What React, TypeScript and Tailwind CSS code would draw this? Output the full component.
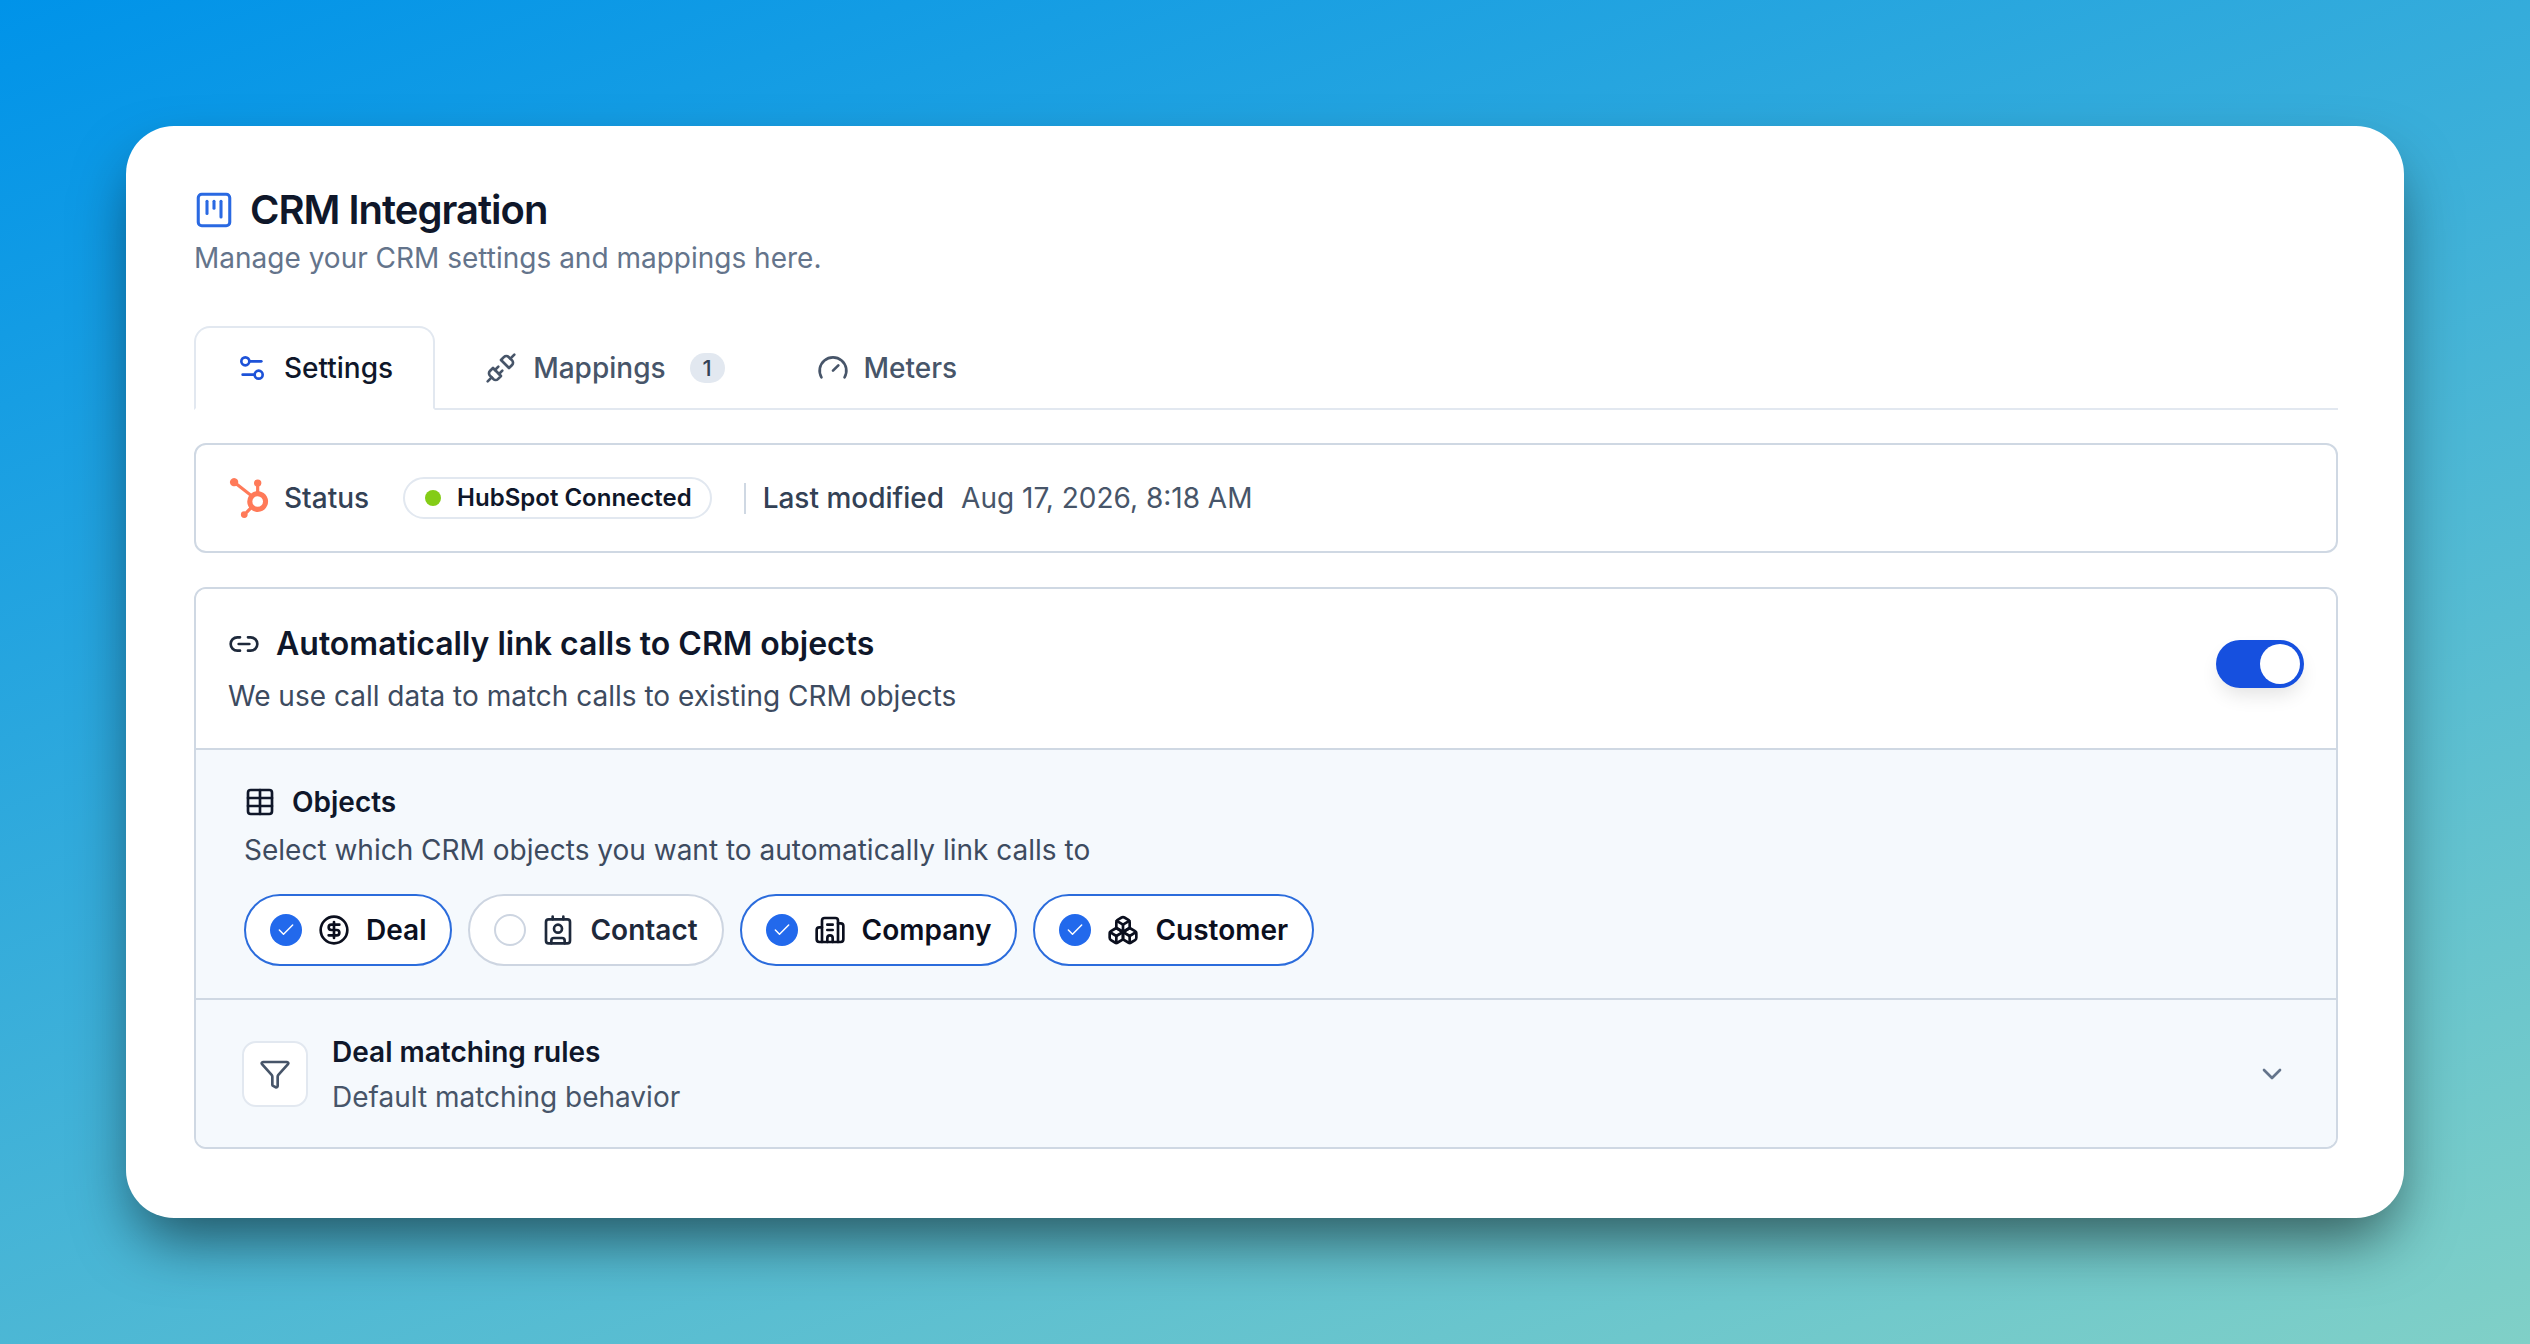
import React from "react";
import {
  Boxes,
  Building2,
  Check,
  ChevronDown,
  CircleDollarSign,
  Contact,
  Funnel,
  Gauge,
  Link2,
  Settings2,
  SquareKanban,
  Table,
  Unplug,
} from "lucide-react";
import { SiHubspot } from "react-icons/si";

type Obj = { label: string; on: boolean; Icon: React.ComponentType<{ size?: number; className?: string }> };

const objects: Obj[] = [
  { label: "Deal", on: true, Icon: CircleDollarSign },
  { label: "Contact", on: false, Icon: Contact },
  { label: "Company", on: true, Icon: Building2 },
  { label: "Customer", on: true, Icon: Boxes },
];

function Chip({ label, on, Icon }: Obj) {
  return (
    <div
      className={
        on
          ? "flex h-[72px] items-center rounded-full border-2 border-[#2b6cdc] bg-white pl-6 pr-6 text-[#0b0f1e]"
          : "flex h-[72px] items-center rounded-full border-2 border-[#cdd5e1] bg-white pl-6 pr-6 text-[#1e293b]"
      }
    >
      {on ? (
        <span className="flex size-8 items-center justify-center rounded-full bg-[#2269ec] text-white">
          <Check size={20} strokeWidth={1.75} />
        </span>
      ) : (
        <span className="size-8 rounded-full border-2 border-[#cdd5e1] bg-white" />
      )}
      <Icon size={32} className="ml-4" />
      <span className="ml-4 text-[28px] font-semibold leading-9">{label}</span>
    </div>
  );
}

export default function App() {
  return (
    <div className="min-h-screen bg-[linear-gradient(160deg,#0093E9_0%,#80D0C7_100%)] p-[126px] font-[Inter,sans-serif]">
      <div className="rounded-[48px] bg-white pb-[69px] pl-[68px] pr-[66px] pt-[60px] shadow-[0_30px_60px_-10px_rgba(0,0,0,0.55)]">
        <div className="flex h-12 items-center gap-[15px]">
          <SquareKanban size={42} strokeWidth={1.75} className="-ml-[1px] text-[#2a69e2]" />
          <h1 className="text-[40px] font-semibold leading-[48px] tracking-[-1px] text-[#0f172a]">CRM Integration</h1>
        </div>
        <p className="mt-1 text-[28px] leading-10 text-[#64748b]">Manage your CRM settings and mappings here.</p>

        <div className="mt-12 flex gap-2 border-b-2 border-[#e2e8f0]">
          <div className="-mb-[2px] flex h-[84px] items-center gap-4 rounded-t-[16px] border-2 border-[#e2e8f0] border-b-white bg-white pl-10 pr-10">
            <Settings2 size={32} className="text-[#1d52d8]" />
            <span className="text-[28px] font-medium text-[#0f172a]">Settings</span>
          </div>
          <div className="-mb-[2px] flex h-[84px] items-center border-2 border-transparent px-10">
            <Unplug size={32} className="text-[#475569]" />
            <span className="ml-4 text-[28px] font-medium text-[#475569]">Mappings</span>
            <span className="ml-6 flex h-[30px] w-[35px] items-center justify-center rounded-full bg-[#e2e8f0] text-[22px] font-medium text-[#334155]">
              1
            </span>
          </div>
          <div className="-mb-[2px] flex h-[84px] items-center gap-[15px] border-2 border-transparent pl-10 pr-10">
            <Gauge size={32} className="text-[#475569]" />
            <span className="text-[28px] font-medium text-[#475569]">Meters</span>
          </div>
        </div>

        <div className="mt-[33px] flex h-[110px] items-center rounded-xl border-2 border-[#cfd8e3] pl-[33px]">
          <SiHubspot size={40} className="text-[#ff7a59]" />
          <span className="ml-[15px] text-[28px] font-medium text-[#334155]">Status</span>
          <span className="ml-[34px] flex h-[42px] items-center rounded-full border-2 border-[#e2e8f0] bg-white pl-5 pr-[18px]">
            <span className="size-4 rounded-full bg-[#84cc16]" />
            <span className="ml-4 text-[24px] font-semibold text-[#0f172a]">HubSpot Connected</span>
          </span>
          <span className="ml-8 h-[31px] w-[2px] bg-[#cfd8e3]" />
          <span className="ml-[17px] text-[28px] font-medium text-[#334155]">Last modified</span>
          <span className="ml-[17px] text-[28px] text-[#475569]">Aug 17, 2026, 8:18 AM</span>
        </div>

        <div className="mt-[34px] overflow-hidden rounded-xl border-2 border-[#cfd8e3]">
          <div className="flex h-[159px] items-start justify-between bg-white pl-8 pr-8 pt-[35px]">
            <div>
              <div className="flex h-10 items-center gap-4">
                <Link2 size={32} className="text-[#1e293b]" />
                <span className="text-[32px] font-semibold leading-10 text-[#0f172a]">Automatically link calls to CRM objects</span>
              </div>
              <p className="mt-3 text-[28px] leading-10 text-[#3d4b60]">We use call data to match calls to existing CRM objects</p>
            </div>
            <div className="mt-4 flex h-12 w-[88px] items-center justify-end rounded-full bg-[#1650df] p-1 shadow-[0_10px_20px_-4px_rgba(0,0,0,0.12)]">
              <span className="size-10 rounded-full bg-white" />
            </div>
          </div>

          <div className="border-t-2 border-[#cfd8e3] bg-[#f5f9fd] pb-8 pl-12 pr-8 pt-[34px]">
            <div className="flex h-9 items-center gap-4">
              <Table size={32} className="text-[#0f172a]" />
              <span className="text-[28px] font-semibold leading-9 text-[#0f172a]">Objects</span>
            </div>
            <p className="mt-[10px] text-[28px] leading-10 text-[#3d4b60]">Select which CRM objects you want to automatically link calls to</p>
            <div className="mt-6 flex gap-4">
              {objects.map((o) => (
                <Chip key={o.label} {...o} />
              ))}
            </div>
          </div>

          <div className="flex items-center justify-between border-t-2 border-[#cfd8e3] bg-[#f5f9fd] py-8 pl-[46px] pr-12">
            <div className="flex items-center gap-6">
              <div className="flex size-[66px] items-center justify-center rounded-[14px] border-2 border-[#e2e8f0] bg-white">
                <Funnel size={32} className="text-[#475569]" />
              </div>
              <div className="flex flex-col gap-[9px] pt-[2px]">
                <span className="text-[28px] font-semibold leading-9 text-[#0f172a]">Deal matching rules</span>
                <span className="text-[28px] leading-9 text-[#475569]">Default matching behavior</span>
              </div>
            </div>
            <ChevronDown size={32} className="text-[#64748b]" />
          </div>
        </div>
      </div>
    </div>
  );
}
